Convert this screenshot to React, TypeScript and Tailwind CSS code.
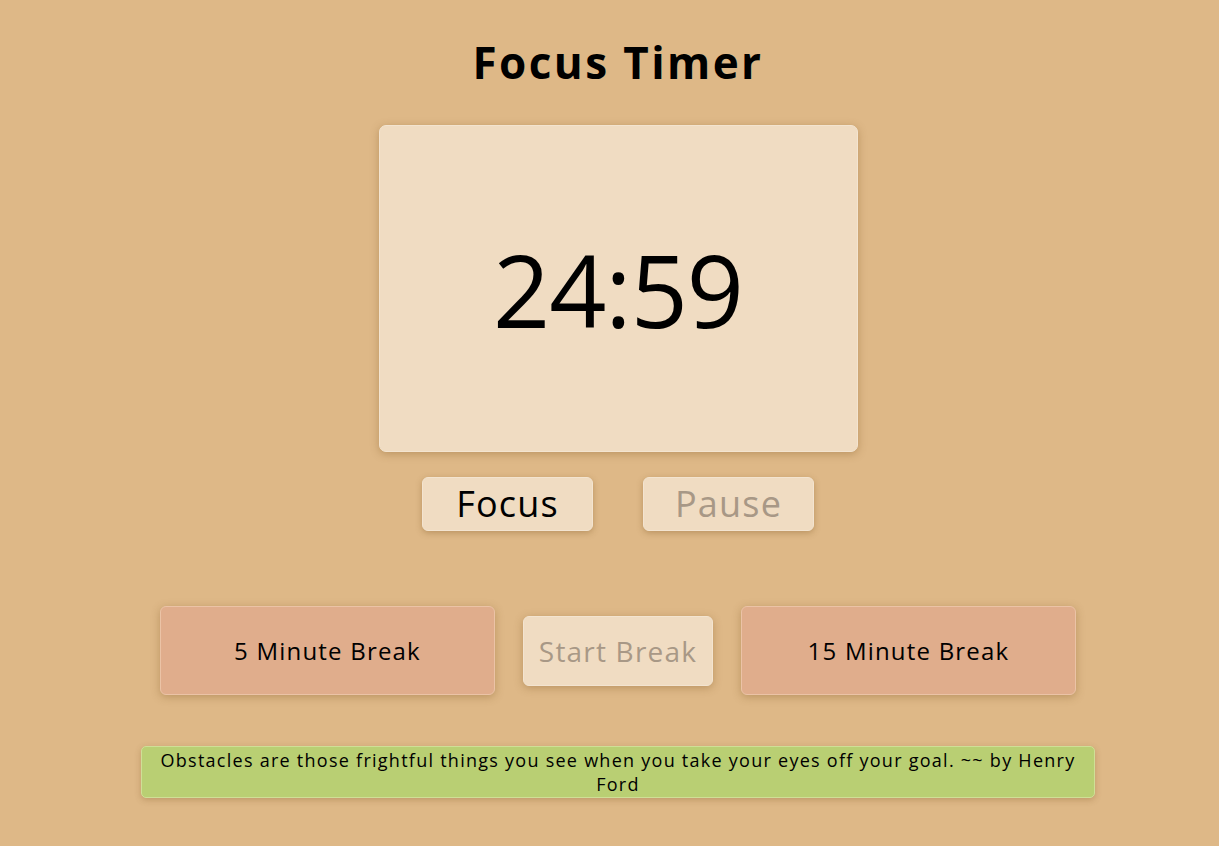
export default function App() {
  const font = { fontFamily: '"Open Sans", "Noto Sans", sans-serif' }

  return (
    <div className="min-h-screen w-full bg-[#deb887] text-black" style={font}>
      <div className="flex flex-col items-center pl-[17px] pt-[34px] tracking-[0.075em]">
        <h1 className="text-[44px] font-bold leading-[56px] tracking-[0.055em]">Focus Timer</h1>

        {/* timer card */}
        <div className="mt-[35px] flex h-[327px] w-[479px] items-center justify-center rounded-[7px] border border-[#f3e4d0] bg-[#f0dcc2] shadow-[0_2px_8px_rgba(120,80,30,0.35)]">
          <span className="text-[100px] leading-none tracking-[-1px]">24:59</span>
        </div>

        <div className="mt-[25px] flex gap-[50px]">
          <button className="flex h-[54px] w-[171px] items-center justify-center rounded-[6px] border border-[#f3e4d0] bg-[#f0dcc2] text-[36px] leading-none shadow-[0_2px_6px_rgba(120,80,30,0.35)]">
            Focus
          </button>
          <button className="flex h-[54px] w-[171px] items-center justify-center rounded-[6px] border border-[#f3e4d0] bg-[#f0dcc2] text-[36px] leading-none text-[#a89886] shadow-[0_2px_6px_rgba(120,80,30,0.35)]">
            Pause
          </button>
        </div>

        {/* break row */}
        <div className="mt-[75px] flex items-center gap-[28px]">
          <button className="flex h-[89px] w-[335px] items-center justify-center rounded-[6px] border border-[#ebc3a6] bg-[#e0ad8c] text-[24px] shadow-[0_2px_8px_rgba(120,80,30,0.35)]">
            5 Minute Break
          </button>
          <button className="flex h-[70px] w-[190px] items-center justify-center rounded-[6px] border border-[#f3e4d0] bg-[#f0dcc2] text-[28px] text-[#a89886] shadow-[0_2px_8px_rgba(120,80,30,0.35)]">
            Start Break
          </button>
          <button className="flex h-[89px] w-[335px] items-center justify-center rounded-[6px] border border-[#ebc3a6] bg-[#e0ad8c] text-[24px] shadow-[0_2px_8px_rgba(120,80,30,0.35)]">
            15 Minute Break
          </button>
        </div>

        {/* quote */}
        <div className="mt-[51px] w-[954px] rounded-[5px] border border-[#cfdf96] bg-[#b9cf73] px-2 pt-[1px] pb-[1px] text-center text-[18px] leading-[24px] tracking-[0.07em] shadow-[0_2px_6px_rgba(120,80,30,0.3)]">
          Obstacles are those frightful things you see when you take your eyes off your goal. ~~ by Henry
          <br />
          Ford
        </div>
      </div>
    </div>
  )
}
